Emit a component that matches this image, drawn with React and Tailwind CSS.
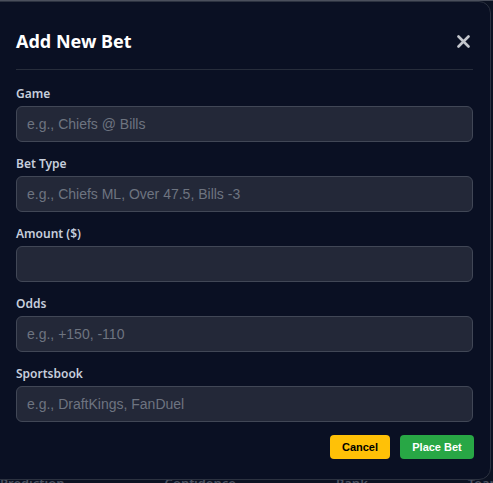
import { useState } from 'react';

const fields = [
  { label: 'Game', placeholder: 'e.g., Chiefs @ Bills' },
  { label: 'Bet Type', placeholder: 'e.g., Chiefs ML, Over 47.5, Bills -3' },
  { label: 'Amount ($)', placeholder: '' },
  { label: 'Odds', placeholder: 'e.g., +150, -110' },
  { label: 'Sportsbook', placeholder: 'e.g., DraftKings, FanDuel' },
];

export default function App() {
  const [values, setValues] = useState({});

  return (
    <div className="relative w-[493px] h-[483px] overflow-hidden bg-[#0c1222]">
      {/* page behind the modal */}
      <div className="absolute left-0 right-0 top-0 h-px bg-[#4a4f5c]" />
      <div
        className="absolute left-0 top-[474px] flex gap-[100px] text-[13px] text-[#4b5261] font-semibold"
        style={{ fontFamily: '"Noto Sans", sans-serif' }}
      >
        <span>Prediction</span>
        <span>Confidence</span>
        <span>Rank</span>
        <span>Team</span>
      </div>

      <div
        className="absolute left-[-12px] top-px w-[503px] h-[479px] rounded-xl border border-[#2c3240] bg-[#0a1023] pl-[27px] pr-[17px] pt-[27px]"
        style={{ fontFamily: '"Noto Sans", sans-serif' }}
      >
        <div className="flex items-center justify-between pb-4 border-b border-[#272d3b]">
          <h2 className="text-[18px] leading-6 font-bold text-white">Add New Bet</h2>
          <button className="mr-[3px] text-[#c3c6cc]">
            <svg width="13" height="13" viewBox="0 0 13 13">
              <path d="M1.5 1.5 L11.5 11.5 M11.5 1.5 L1.5 11.5" stroke="currentColor" strokeWidth="2.6" strokeLinecap="round" />
            </svg>
          </button>
        </div>

        <div className="pt-[14px] flex flex-col gap-3">
          {fields.map((f) => (
            <div key={f.label}>
              <label className="block text-xs leading-[18px] font-semibold text-[#c6cedc] pt-px mb-[3px]">{f.label}</label>
              <input
                type="text"
                placeholder={f.placeholder}
                value={values[f.label] || ''}
                onChange={(e) => setValues({ ...values, [f.label]: e.target.value })}
                className="block w-full h-9 px-[10px] rounded-md bg-[#232838] border border-[#414756] text-sm text-white placeholder:text-[#6e7480] focus:outline-none"
                style={{ fontFamily: '"Liberation Sans", Arial, sans-serif' }}
              />
            </div>
          ))}
        </div>

        <div
          className="flex justify-end gap-[10px] mt-[13px] -mr-px"
          style={{ fontFamily: '"Liberation Sans", Arial, sans-serif' }}
        >
          <button className="h-6 w-[60px] rounded bg-[#ffc107] text-[11px] font-bold text-black">Cancel</button>
          <button className="h-6 w-[74px] rounded bg-[#28a745] text-[11px] font-bold text-white">Place Bet</button>
        </div>
      </div>
    </div>
  );
}
